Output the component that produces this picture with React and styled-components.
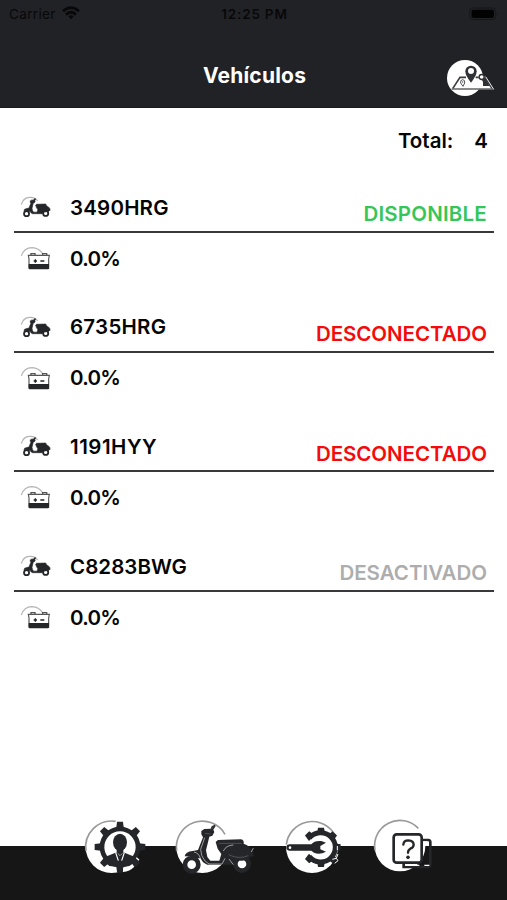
import React from "react";
import styled, { createGlobalStyle } from "styled-components";

const GlobalStyle = createGlobalStyle`
  * { box-sizing: border-box; }
  body { margin: 0; background: #fff; }
`;

const Screen = styled.div`
  width: 507px;
  height: 900px;
  display: flex;
  flex-direction: column;
  background: #fff;
  color: #050505;
  font-family: Inter, "Liberation Sans", sans-serif;
  overflow: hidden;
`;

const Header = styled.header`
  height: 108px;
  flex: none;
  background: #212226;
  border-bottom: 1px solid #1a1b1e;
`;

const StatusBar = styled.div`
  height: 28px;
  display: grid;
  grid-template-columns: 1fr auto 1fr;
  align-items: center;
  padding: 0 7px 0 9px;
  color: #08080a;
  font-size: 13.5px;
  line-height: 28px;
`;

const Carrier = styled.div`
  display: flex;
  align-items: center;
  gap: 6px;
  letter-spacing: 0.35px;
  svg { display: block; margin-top: -2px; }
`;

const Clock = styled.div`
  font-weight: 600;
  font-size: 13.5px;
  letter-spacing: 0.8px;
`;

const BatteryLevel = styled.div`
  justify-self: end;
  svg { display: block; }
`;

const TitleBar = styled.div`
  height: 79px;
  display: grid;
  grid-template-columns: 72px 1fr 72px;
  align-items: center;
`;

const Title = styled.h1`
  grid-column: 2;
  margin: 16px 0 0 2px;
  text-align: center;
  color: #fff;
  font-size: 21px;
  line-height: 24px;
  font-weight: 650;
  letter-spacing: 0.2px;
`;

const MapButton = styled.button`
  width: 72px;
  height: 56px;
  padding: 0;
  border: 0;
  background: none;
  margin-top: 21px;
  svg { display: block; }
`;

const Content = styled.main`
  flex: 1;
  padding: 0 13px 0 14px;
`;

const Total = styled.div`
  display: flex;
  justify-content: flex-end;
  gap: 21px;
  padding: 21px 6px 0 0;
  height: 77px;
  font-size: 20.5px;
  line-height: 24px;
  font-weight: 600;
`;

const Vehicle = styled.article`
  height: 119.7px;
`;

const VehicleTop = styled.div`
  height: 48px;
  display: flex;
  align-items: flex-start;
  border-bottom: 2px solid #39393b;
  padding-right: 7px;
  svg { flex: none; margin-top: 5px; }
`;

const Charge = styled.div`
  display: flex;
  align-items: flex-start;
  svg { flex: none; margin-top: 9px; }
`;

const Label = styled.span`
  margin: ${(p) => p.$top}px 0 0 12px;
  font-size: 20.5px;
  line-height: 24px;
  font-weight: 630;
  letter-spacing: ${(p) => p.$tracking || 0}px;
`;

const Status = styled.span`
  margin: 17.4px 0 0 auto;
  font-size: 20.5px;
  line-height: 24px;
  font-weight: 600;
  letter-spacing: ${(p) => p.$tracking}px;
  color: ${(p) => p.$color};
`;

const TabBar = styled.nav`
  flex: none;
  height: 88px;
  display: flex;
  padding-left: 80px;
  background: linear-gradient(transparent 34px, #161617 34px);
`;

const Tab = styled.button`
  display: block;
  width: ${(p) => p.$width}px;
  height: 70px;
  margin: 0 ${(p) => p.$gap || 0}px 0 0;
  padding: 0;
  border: 0;
  background: none;
  svg { display: block; }
`;

const Ink = "#252629";

function WifiIcon() {
  return (
    <svg width="18" height="14" viewBox="0 0 18 14" fill="none" stroke="#08080a" strokeWidth="2.8">
      <path d="M1 5.2Q9-2 17 5.2M4 8.6Q9 4 14 8.6" />
      <path d="M6.3 10.3Q9 8 11.7 10.3L9 13.2Z" fill="#08080a" stroke="none" />
    </svg>
  );
}

function BatteryStatusIcon() {
  return (
    <svg width="31" height="14" viewBox="0 0 31 14">
      <rect x=".7" y="1" width="26" height="11.5" rx="3.2" fill="none" stroke="#141517" />
      <rect x="2.5" y="2.7" width="22.5" height="8.2" rx="1.8" fill="#020203" />
      <path d="M28.5 5Q30 6.7 28.5 8.5Z" fill="#141517" />
    </svg>
  );
}

function MapIcon() {
  return (
    <svg width="72" height="56" viewBox="0 0 216 168">
      <circle cx="90" cy="84" r="54" fill="#fff" />
      <path d="M132 70L145 75L176 118H130Z" fill="#fff" />
      <path d="M93 82H75L53 116M122 82H131M149 82L172 116" fill="none" stroke="#3a3b3e" strokeWidth="5" />
      <path d="M152 80L176 118" stroke="#e5e5e5" strokeWidth="3" />
      <path d="M50 117H174" stroke="#626366" strokeWidth="5" />
      <path d="M108 98Q91 77 91 64A17 17 0 0 1 125 64Q125 77 108 98Z" fill="#303135" />
      <circle cx="108" cy="63" r="9" fill="#fff" />
      <path d="M84 109L77 99Q75 90 83 89Q91 90 89 99Z" fill="#fff" stroke="#505154" strokeWidth="3" />
      <circle cx="83" cy="96" r="2" fill="#505154" />
      <path d="M139 86L150 84L164 108H144V96Z" fill="#303135" />
      <circle cx="140" cy="81" r="7.5" fill="#fff" stroke="#303135" strokeWidth="4" />
    </svg>
  );
}

function ScooterShape({ detailed }) {
  return (
    <g>
      <path d="M44 133Q46 119 68 117L84 114L99 76L94 67V57L103 51L122 50L125 43L134 38L137 42L130 53L133 60L127 71L118 74L108 115L112 135L121 146H148L154 126L143 110L137 90L144 84L213 82Q223 84 221 95Q240 102 248 117L251 132L239 136L233 151L199 150L187 158H112Q97 153 92 139L78 139L70 134Z" fill={Ink} stroke={Ink} strokeWidth={detailed ? 0 : 5} />
      <circle cx="65" cy="158" r="20" fill="#fff" stroke={Ink} strokeWidth="14" />
      <circle cx="216" cy="156" r="20" fill="#fff" stroke={Ink} strokeWidth="14" />
      <path d="M154 119Q164 94 194 96Q229 98 245 122Q238 147 213 146L177 141Q158 133 154 119Z" fill={Ink} />
      {detailed && (
        <path d="M104 77L92 112Q92 132 105 147L117 156H156L165 139M72 120Q87 123 91 139M160 117Q168 100 190 99M177 141L190 158M244 120L250 108" fill="none" stroke="#c8c8c8" strokeWidth="2.2" />
      )}
      {detailed && <path d="M105 64L122 66M124 52L132 43M176 128Q206 143 235 131M146 94H216" fill="none" stroke="#666" strokeWidth="2" />}
    </g>
  );
}

function ScooterTabIcon() {
  return (
    <svg width="90" height="70" viewBox="0 0 270 210">
      <circle cx="97" cy="105" r="78" fill="#fff" />
      <path d="M20 117A78 78 0 0 1 165 67" fill="none" stroke="#999" strokeWidth="5" />
      <ScooterShape detailed />
    </svg>
  );
}

function SmallScooterIcon() {
  return (
    <svg width="44" height="34" viewBox="0 0 132 102">
      <path d="M22 44Q27 23 47 22Q63 21 71 33" fill="none" stroke="#b5b5b5" strokeWidth="3.5" />
      <g transform="translate(13 11) scale(.38)">
        <ScooterShape />
      </g>
    </svg>
  );
}

function CarBatteryIcon() {
  return (
    <svg width="44" height="34" viewBox="0 0 132 102">
      <path d="M22 42Q30 17 54 17Q75 18 85 34" fill="none" stroke="#b5b5b5" strokeWidth="3.5" />
      <path d="M43 40H106L104 51V78H45V51Z" fill="#fff" stroke="#555" strokeWidth="3.5" />
      <path d="M51 39V35H63V39M86 39V35H98V39" fill="none" stroke="#555" strokeWidth="4" />
      <path d="M44 66H105V79Q105 82 102 82H47Q44 82 44 79Z" fill={Ink} />
      <path d="M59 57H69M64 52V62M79 57H91" stroke={Ink} strokeWidth="4" />
    </svg>
  );
}

const teeth = [0, 45, 90, 135, 180, 225, 270, 315];

function ProfileTabIcon() {
  return (
    <svg width="90" height="70" viewBox="0 0 270 210">
      <circle cx="95" cy="105" r="78" fill="#fff" />
      <path d="M18 117A78 78 0 0 1 107 28" fill="none" stroke="#999" strokeWidth="5" />
      {teeth.map((a) => (
        <path key={a} d="M-9-76H9L12-50H-12Z" transform={`translate(120 105) rotate(${a})`} fill={Ink} />
      ))}
      <circle cx="120" cy="105" r="54" fill="#fff" stroke={Ink} strokeWidth="14" />
      <path d="M70 146Q74 133 88 130L106 122H134L152 130Q166 133 170 146L152 162L126 164V182H112V164L88 162Z" fill={Ink} />
      <path d="M110 110H130V124L120 132L110 124Z" fill={Ink} />
      <ellipse cx="120" cy="91" rx="21" ry="26" fill={Ink} />
      <path d="M107 122L115 146M133 122L125 146" fill="none" stroke="#fff" strokeWidth="3.5" />
      <path d="M113 124L120 131L127 124" fill="none" stroke="#ddd" strokeWidth="2" />
      <path d="M129 167Q147 165 157 156L163 164Q149 178 129 180Z" fill="#fff" />
      <path d="M169 137L177 145" stroke="#fff" strokeWidth="4" />
    </svg>
  );
}

function ServiceTabIcon() {
  return (
    <svg width="70" height="70" viewBox="0 0 210 210">
      <circle cx="96" cy="105" r="78" fill="#fff" />
      <path d="M19 98A78 78 0 0 1 159 60" fill="none" stroke="#999" strokeWidth="5" />
      {[-45, 0, 45, 90, 135, 180, 225].map((a) => (
        <path key={a} d="M-9-59H9L12-39H-12Z" transform={`translate(123 106) rotate(${a})`} fill={Ink} />
      ))}
      <path d="M88 78A44 44 0 1 1 88 134" fill="none" stroke={Ink} strokeWidth="15" />
      <path d="M174 126L169 139L157 142M172 102V115M169 139L174 146L164 154" fill="none" stroke="#fff" strokeWidth="3" />
      <path d="M30 97H94Q103 85 124 87L138 92L121 102V112L138 119Q119 130 102 122L94 116H30Q19 116 19 106.500Q19 97 30 97Z" fill={Ink} />
      <circle cx="30" cy="107" r="4" fill="#fff" />
    </svg>
  );
}

function HelpTabIcon() {
  return (
    <svg width="72" height="70" viewBox="0 0 216 210">
      <circle cx="96" cy="102" r="76" fill="#fff" />
      <path d="M21 115A76 76 0 0 1 151 49" fill="none" stroke="#999" strokeWidth="5" />
      <path d="M163 84H181Q187 84 187 91V155Q187 165 178 165H107V151" fill="none" stroke={Ink} strokeWidth="8" />
      <path d="M166 90H174Q181 91 181 99M112 160H154M169 160H184" fill="none" stroke="#fff" strokeWidth="4" />
      <rect x="77" y="67" width="84" height="85" rx="9" fill="#fff" stroke={Ink} strokeWidth="8" />
      <path d="M106 98Q107 85 121 85Q137 86 137 98Q137 106 127 110Q120 114 120 122" fill="none" stroke={Ink} strokeWidth="7" strokeLinecap="round" />
      <circle cx="120" cy="136" r="5.500" fill={Ink} />
    </svg>
  );
}

const vehicles = [
  { plate: "3490HRG", plateTracking: 0.2, status: "DISPONIBLE", tracking: 0.2, color: "#35c65a" },
  { plate: "6735HRG", plateTracking: 0.25, status: "DESCONECTADO", tracking: -0.05, color: "#f50b0b" },
  { plate: "1191HYY", plateTracking: 0.5, status: "DESCONECTADO", tracking: -0.05, color: "#f50b0b" },
  { plate: "C8283BWG", plateTracking: 0.05, status: "DESACTIVADO", tracking: 0, color: "#adadad" },
];

export default function App() {
  return (
    <Screen>
      <GlobalStyle />
      <Header>
        <StatusBar>
          <Carrier>Carrier<WifiIcon /></Carrier>
          <Clock>12:25 PM</Clock>
          <BatteryLevel><BatteryStatusIcon /></BatteryLevel>
        </StatusBar>
        <TitleBar>
          <Title>Vehículos</Title>
          <MapButton aria-label="Mapa"><MapIcon /></MapButton>
        </TitleBar>
      </Header>
      <Content>
        <Total><span>Total:</span><span>4</span></Total>
        {vehicles.map((v) => (
          <Vehicle key={v.plate}>
            <VehicleTop>
              <SmallScooterIcon />
              <Label $top={10.6} $tracking={v.plateTracking}>{v.plate}</Label>
              <Status $color={v.color} $tracking={v.tracking}>{v.status}</Status>
            </VehicleTop>
            <Charge>
              <CarBatteryIcon />
              <Label $top={13.6} $tracking={-0.7}>0.0%</Label>
            </Charge>
          </Vehicle>
        ))}
      </Content>
      <TabBar>
        <Tab $width={90} aria-label="Perfil"><ProfileTabIcon /></Tab>
        <Tab $width={90} $gap={20} aria-label="Vehículos"><ScooterTabIcon /></Tab>
        <Tab $width={70} $gap={18} aria-label="Servicio"><ServiceTabIcon /></Tab>
        <Tab $width={72} aria-label="Ayuda"><HelpTabIcon /></Tab>
      </TabBar>
    </Screen>
  );
}
